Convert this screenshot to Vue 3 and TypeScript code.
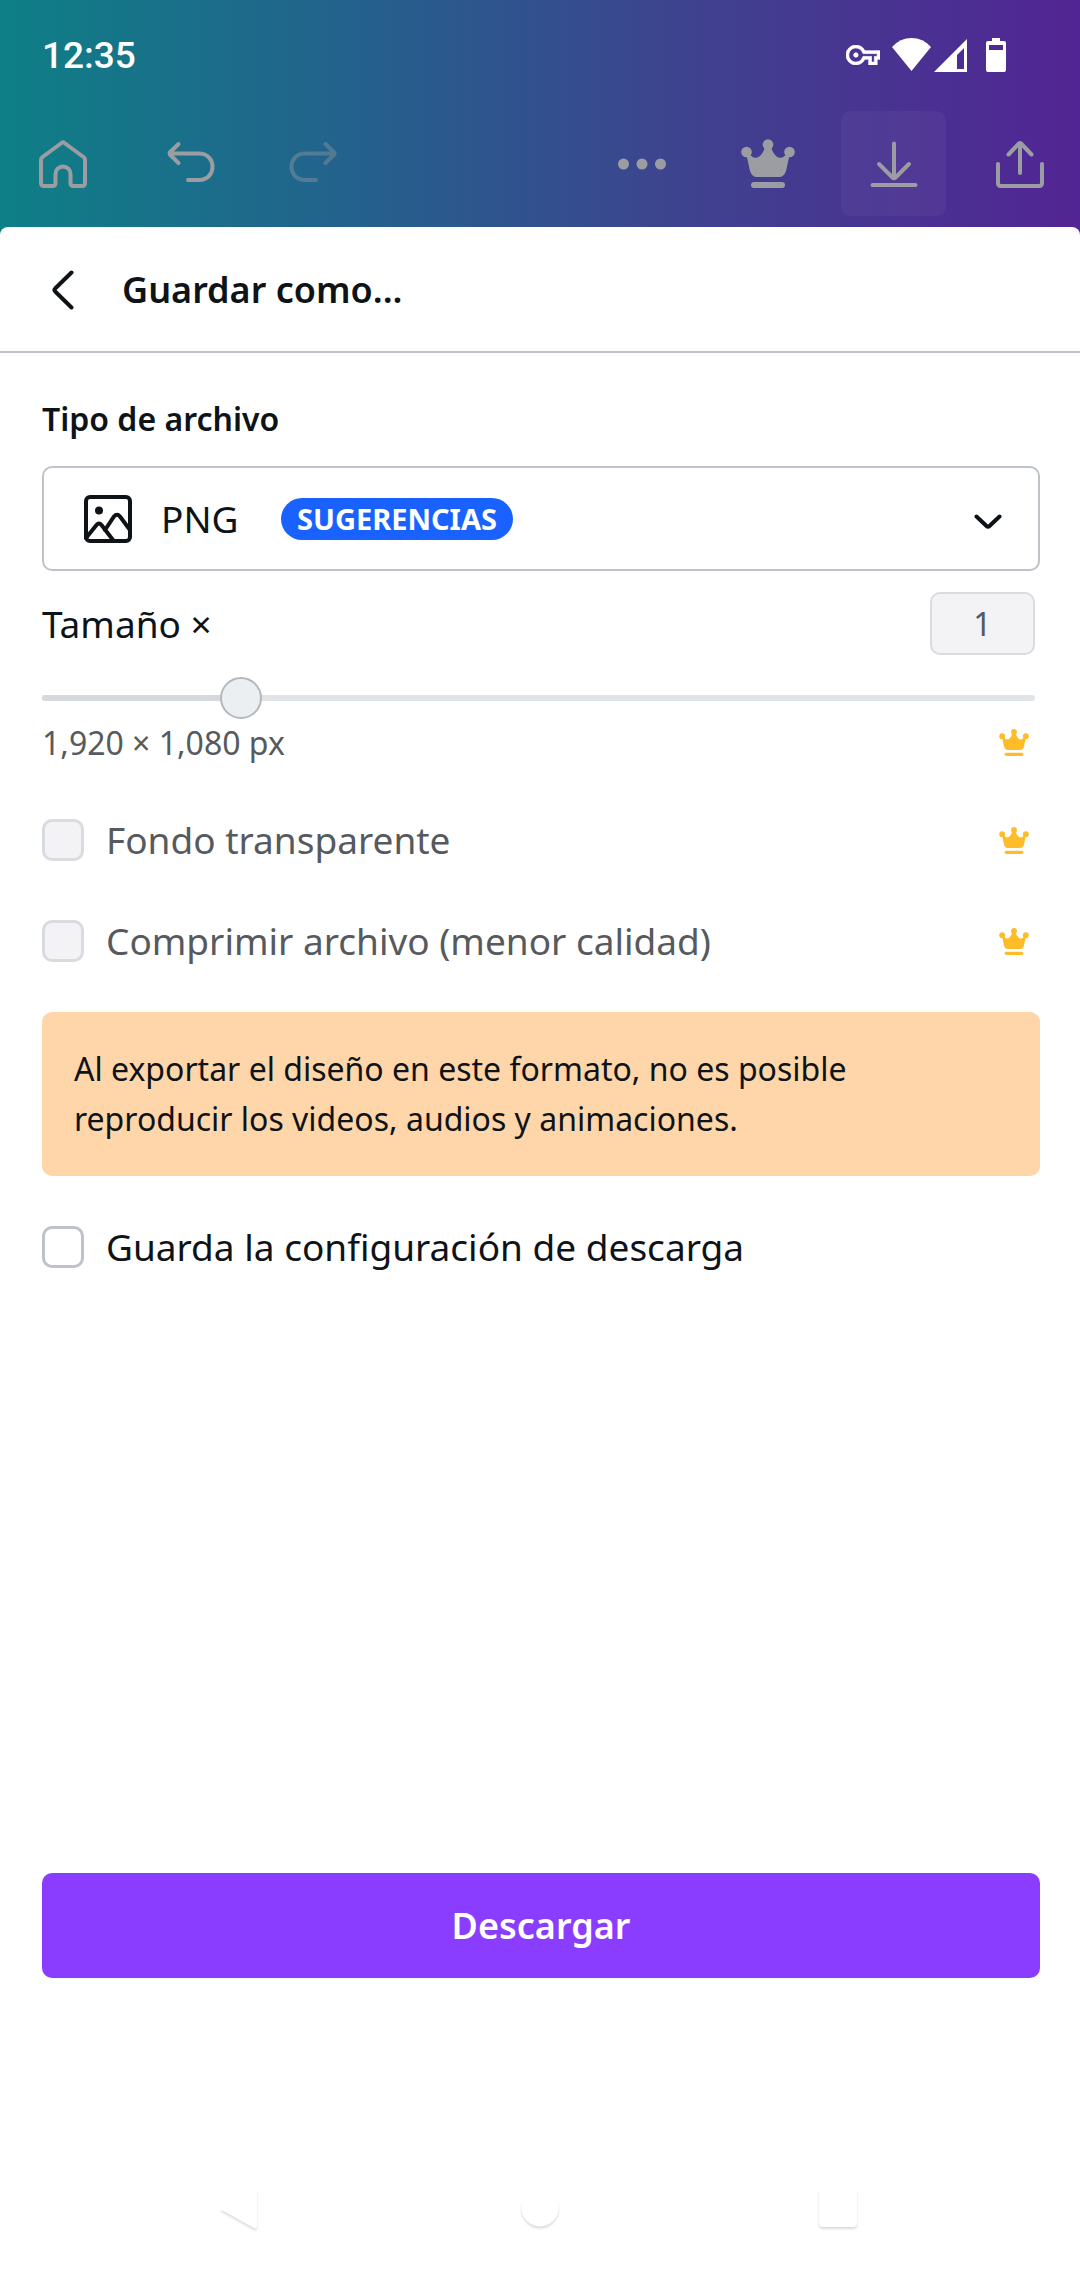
<script setup lang="ts">
import { computed, ref } from 'vue'

interface Option {
  id: string
  label: string
  pro: boolean
}

const fileType = ref('png')
const scale = ref(1)
const minScale = 0.5
const maxScale = 3
const fill = computed(() => ((scale.value - minScale) / (maxScale - minScale)) * 100 + '%')

const proOptions: Option[] = [
  { id: 'transparent', label: 'Fondo transparente', pro: true },
  { id: 'compress', label: 'Comprimir archivo (menor calidad)', pro: true },
]
const saveSettings = ref(false)
</script>

<template>
  <div class="screen">
    <svg class="defs" width="0" height="0" aria-hidden="true">
      <symbol id="crown" viewBox="0 0 54 49">
        <circle cx="5.500" cy="13" r="5.300" />
        <circle cx="27" cy="5.500" r="5.300" />
        <circle cx="48.500" cy="13" r="5.300" />
        <path d="M5 14 L9 15 C12 21 20 21 24 8 H30 C34 21 42 21 45 15 L49 14 L45 32 Q43 38 38 38 H16 Q11 38 9 32 Z" />
        <rect x="10" y="43" width="34" height="6" rx="3" />
      </symbol>
    </svg>

    <header class="top">
      <div class="status">
        <time class="clock">12:35</time>
        <div class="status-icons">
          <svg width="34" height="20" viewBox="0 5 24 14" fill="#fff" stroke="#fff" stroke-width="0.500">
            <path d="M22 19h-6v-4h-2.680c-1.140 2.420-3.600 4-6.320 4-3.860 0-7-3.140-7-7s3.140-7 7-7c2.720 0 5.170 1.580 6.320 4H24v6h-2v4zm-4-2h2v-4h2v-2H11.940l-.230-.670C11.010 8.340 9.110 7 7 7c-2.760 0-5 2.240-5 5s2.240 5 5 5c2.110 0 4.010-1.340 4.710-3.330l.230-.670H18v4z" />
            <circle cx="7" cy="12" r="1.600" />
          </svg>
          <svg class="wifi" width="39" height="34" viewBox="0 0 39 34" fill="#fff">
            <path d="M0 9 Q8 0 19.500 0 T39 9 L19.500 33 Z" />
          </svg>
          <svg class="signal" width="33" height="33" viewBox="0 0 33 33">
            <path fill="#fff" fill-rule="evenodd" d="M33 0 V33 H0 Z M30 9 L23 16 V30 H30 Z" />
          </svg>
          <svg class="battery" width="20" height="34" viewBox="0 0 20 34">
            <path fill="#fff" fill-rule="evenodd" d="M6 0 H14 V3 H18 Q20 3 20 5 V32 Q20 34 18 34 H2 Q0 34 0 32 V5 Q0 3 2 3 H6 Z M3 7 V12 H17 V7 Z" />
          </svg>
        </div>
      </div>

      <nav class="toolbar">
        <button type="button" class="tool" aria-label="Inicio">
          <svg width="48" height="48" viewBox="0 0 48 48">
            <path d="M22.500 3 Q24 1.800 25.500 3 L44.500 17 Q46 18 46 20 V43 Q46 46 43 46 H34.500 Q31.500 46 31.500 43 V34 A7.500 7.500 0 0 0 16.500 34 V43 Q16.500 46 13.500 46 H5 Q2 46 2 43 V20 Q2 18 3.500 17 Z" />
          </svg>
        </button>
        <div class="history">
          <button type="button" class="tool" aria-label="Deshacer">
            <svg width="48" height="48" viewBox="0 0 48 48">
              <path d="M11.500 4 L2.800 12.500 Q2 13.500 2.800 14.500 L11.500 23 M3 13.500 H32 C50 13.500 50 40 32 40 H21" />
            </svg>
          </button>
          <button type="button" class="tool faded" aria-label="Rehacer" disabled>
            <svg width="48" height="48" viewBox="0 0 48 48">
              <path d="M36.500 4 L45.200 12.500 Q46 13.500 45.200 14.500 L36.500 23 M45 13.500 H16 C-2 13.500 -2 40 16 40 H27" />
            </svg>
          </button>
        </div>
        <div class="actions">
          <button type="button" class="tool solid" aria-label="Más">
            <svg width="48" height="48" viewBox="0 0 48 48">
              <circle cx="5.500" cy="24" r="5.500" /><circle cx="24" cy="24" r="5.500" /><circle cx="42.500" cy="24" r="5.500" />
            </svg>
          </button>
          <button type="button" class="tool solid" aria-label="Pro">
            <svg width="54" height="49"><use href="#crown" /></svg>
          </button>
          <button type="button" class="tool active" aria-label="Descargar diseño">
            <svg width="48" height="48" viewBox="0 0 48 48">
              <path d="M24 3.500 V38 M9 24 L22.500 37.500 Q24 39 25.500 37.500 L39 24 M2.500 45 H45.500" />
            </svg>
          </button>
          <button type="button" class="tool" aria-label="Compartir">
            <svg width="48" height="48" viewBox="0 0 48 48">
              <path d="M24 3 V33 M12.500 14.500 L23 3.500 Q24 2.500 25 3.500 L35.500 14.500 M2 24 V43 Q2 46 5 46 H43 Q46 46 46 43 V24" />
            </svg>
          </button>
        </div>
      </nav>
    </header>

    <main class="sheet">
      <div class="sheet-head">
        <button type="button" class="back" aria-label="Volver">
          <svg width="22" height="40" viewBox="0 0 22 40">
            <path d="M19.500 2.500 L3.200 18.500 Q1.500 20 3.200 21.500 L19.500 37.500" />
          </svg>
        </button>
        <h1>Guardar como...</h1>
      </div>

      <form class="body" @submit.prevent>
        <label class="caption" for="type">Tipo de archivo</label>
        <div class="picker">
          <select id="type" v-model="fileType">
            <option value="png">PNG</option>
          </select>
          <div class="picker-art">
            <svg width="48" height="48" viewBox="0 0 48 48">
              <rect x="2" y="2" width="44" height="44" rx="4" />
              <path d="M2 43 L12.500 30 Q15 27 17.500 30 L29 45 M21 35 L30 21.500 Q33 18 36 21.500 L46 35" />
              <circle class="dot" cx="15" cy="15.500" r="4" />
            </svg>
            <span class="badge">SUGERENCIAS</span>
            <svg class="caret" width="28" height="24" viewBox="0 0 28 24">
              <path d="M2.500 9.500 L12.500 19 Q14 20.500 15.500 19 L25.500 9.500" />
            </svg>
          </div>
        </div>

        <div class="row size">
          <label for="size">Tamaño ×</label>
          <input id="size" class="number" type="text" :value="scale" disabled />
        </div>
        <div class="slider">
          <div class="track"><div class="fill" :style="{ width: fill }"></div></div>
          <input v-model.number="scale" type="range" :min="minScale" :max="maxScale" step="0.125" aria-label="Tamaño" disabled />
        </div>
        <div class="row info">
          <span>1,920 × 1,080 px</span>
          <svg class="pro" width="30" height="27"><use href="#crown" /></svg>
        </div>

        <div v-for="option in proOptions" :key="option.id" class="row check muted">
          <input :id="option.id" type="checkbox" disabled />
          <label :for="option.id">{{ option.label }}</label>
          <svg v-if="option.pro" class="pro" width="30" height="27"><use href="#crown" /></svg>
        </div>

        <p class="notice">Al exportar el diseño en este formato, no es posible reproducir los videos, audios y animaciones.</p>

        <div class="row check">
          <input id="save" v-model="saveSettings" type="checkbox" />
          <label for="save">Guarda la configuración de descarga</label>
        </div>

        <button type="submit" class="submit">Descargar</button>
      </form>
    </main>

    <footer class="system">
      <svg width="40" height="44" viewBox="0 0 40 44">
        <path d="M-2 21 L32 40 Q35 41 35 38 V3 Q35 0 32 1 Z" />
      </svg>
      <svg width="40" height="44" viewBox="0 0 40 44">
        <circle cx="20" cy="20" r="18.500" />
      </svg>
      <svg width="40" height="44" viewBox="0 0 40 44">
        <rect x="1" y="0" width="38" height="39" rx="4" />
      </svg>
    </footer>
  </div>
</template>

<style>
body {
  margin: 0;
  background: #fff;
}
</style>

<style scoped>
.screen {
  display: flex;
  flex-direction: column;
  min-height: 100vh;
  box-sizing: border-box;
  background: #fff;
  color: #0e1318;
  font-family: 'Noto Sans', sans-serif;
  font-size: 37px;
  line-height: 44px;
}
.screen * {
  box-sizing: border-box;
}
.defs {
  position: absolute;
}
svg {
  display: block;
  flex: none;
}
button,
input,
select {
  margin: 0;
  padding: 0;
  border: 0;
  background: none;
  color: inherit;
  font: inherit;
  opacity: 1;
}

.top {
  padding-bottom: 21px;
  background: linear-gradient(90deg, #0e7f86 0%, #24618d 33%, #40408f 66%, #522594 100%);
}
.status {
  display: flex;
  justify-content: space-between;
  height: 111px;
  padding: 34px 74px 0 42px;
}
.clock {
  color: #fff;
  font-family: Roboto, sans-serif;
  font-size: 37px;
  font-weight: 500;
}
.status-icons {
  display: flex;
  align-items: center;
  height: 42px;
}
.wifi {
  margin-left: 12px;
}
.signal {
  margin-left: 3px;
}
.battery {
  margin-left: 19px;
}
.toolbar {
  display: flex;
  padding: 0 8px 0 10px;
}
.history {
  display: flex;
  gap: 17px;
  margin-left: 23px;
}
.actions {
  display: flex;
  gap: 21px;
  margin-left: auto;
}
.tool {
  display: flex;
  align-items: center;
  justify-content: center;
  width: 105px;
  height: 105px;
  border-radius: 10px;
}
.tool svg {
  overflow: visible;
  fill: none;
  stroke: #9b9da3;
  stroke-width: 4px;
  stroke-linecap: round;
  stroke-linejoin: round;
}
.tool.solid svg {
  fill: #9b9da3;
  stroke: none;
}
.tool.active {
  background: rgba(255, 255, 255, 0.04);
}
.tool.faded {
  opacity: 0.4;
}

.sheet {
  display: flex;
  flex: 1;
  flex-direction: column;
  margin-top: -10px;
  border-radius: 8px 8px 0 0;
  background: #fff;
}
.sheet-head {
  display: flex;
  align-items: center;
  gap: 48px;
  height: 126px;
  padding: 2px 52px 0;
  border-bottom: 2px solid #bdc3c9;
}
.back svg {
  fill: none;
  stroke: #0e1318;
  stroke-width: 4px;
  stroke-linecap: round;
}
h1 {
  margin: 0;
  font-size: 36px;
  font-weight: 600;
}

.body {
  display: flex;
  flex: 1;
  flex-direction: column;
  padding: 44px 40px 0 42px;
}
.caption {
  margin-bottom: 25px;
  font-size: 32px;
  font-weight: 600;
}
.picker {
  display: grid;
}
.picker > * {
  grid-area: 1 / 1;
}
.picker select {
  width: 100%;
  height: 105px;
  padding-left: 117px;
  border: 2px solid #bdc3c9;
  border-radius: 10px;
  appearance: none;
}
.picker-art {
  display: flex;
  align-items: center;
  padding: 0 38px 0 42px;
  pointer-events: none;
}
.picker-art svg {
  fill: none;
  stroke: #0e1318;
  stroke-width: 4px;
  stroke-linecap: round;
}
.picker-art .dot {
  fill: #0e1318;
  stroke: none;
}
.badge {
  margin-left: 149px;
  padding: 0 16px;
  border-radius: 21px;
  background: #1a62ff;
  color: #fff;
  font-size: 29px;
  font-weight: 700;
  line-height: 42px;
}
.picker-art .caret {
  margin-left: auto;
}

.row {
  display: flex;
  align-items: center;
}
.size {
  justify-content: space-between;
  margin: 21px 5px 22px 0;
}
.number {
  width: 105px;
  height: 63px;
  border: 2px solid #d8dce1;
  border-radius: 10px;
  background: #f3f3f6;
  color: #565a5e;
  font-size: 32px;
  text-align: center;
}
.slider {
  display: grid;
  align-items: center;
  margin-right: 5px;
}
.slider > * {
  grid-area: 1 / 1;
}
.track {
  height: 6px;
  overflow: hidden;
  border-radius: 3px;
  background: #e0e4e7;
}
.fill {
  height: 100%;
  background: #d5d9dd;
}
.slider input {
  width: calc(100% + 42px);
  height: 42px;
  margin: 0 -21px;
  appearance: none;
}
.slider input::-webkit-slider-thumb {
  width: 42px;
  height: 42px;
  border: 2px solid #b2b8be;
  border-radius: 50%;
  background: #ebeff2;
  appearance: none;
}
.info {
  height: 47px;
  color: #565a5e;
  font-size: 32px;
}
.pro {
  margin-right: 11px;
  margin-left: auto;
  fill: #fdbc28;
}

.check {
  gap: 22px;
  margin-top: 49px;
}
.muted {
  margin-top: 52px;
  color: #565a5e;
}
.muted + .muted {
  margin-top: 57px;
}
.check input {
  flex: none;
  width: 42px;
  height: 42px;
  border: 3px solid #bdc3c9;
  border-radius: 10px;
  background: #fff;
  appearance: none;
}
.check input:checked {
  background: #8b3dff;
}
.muted input {
  border-color: #d8dce1;
  background: #f3f3f6;
}
.notice {
  margin: 49px 0 0;
  padding: 32px;
  border-radius: 10px;
  background: #ffd6a9;
  font-size: 32px;
  line-height: 50px;
}
.submit {
  height: 105px;
  margin-top: auto;
  border-radius: 10px;
  background: #8b3dff;
  color: #fff;
  font-size: 36px;
  font-weight: 600;
}

.system {
  display: flex;
  justify-content: space-between;
  margin-top: 170px;
  padding: 40px 222px 38px;
}
.system svg {
  overflow: visible;
  fill: #fff;
  filter: drop-shadow(0 2px 1px rgba(0, 0, 0, 0.14));
}
</style>
